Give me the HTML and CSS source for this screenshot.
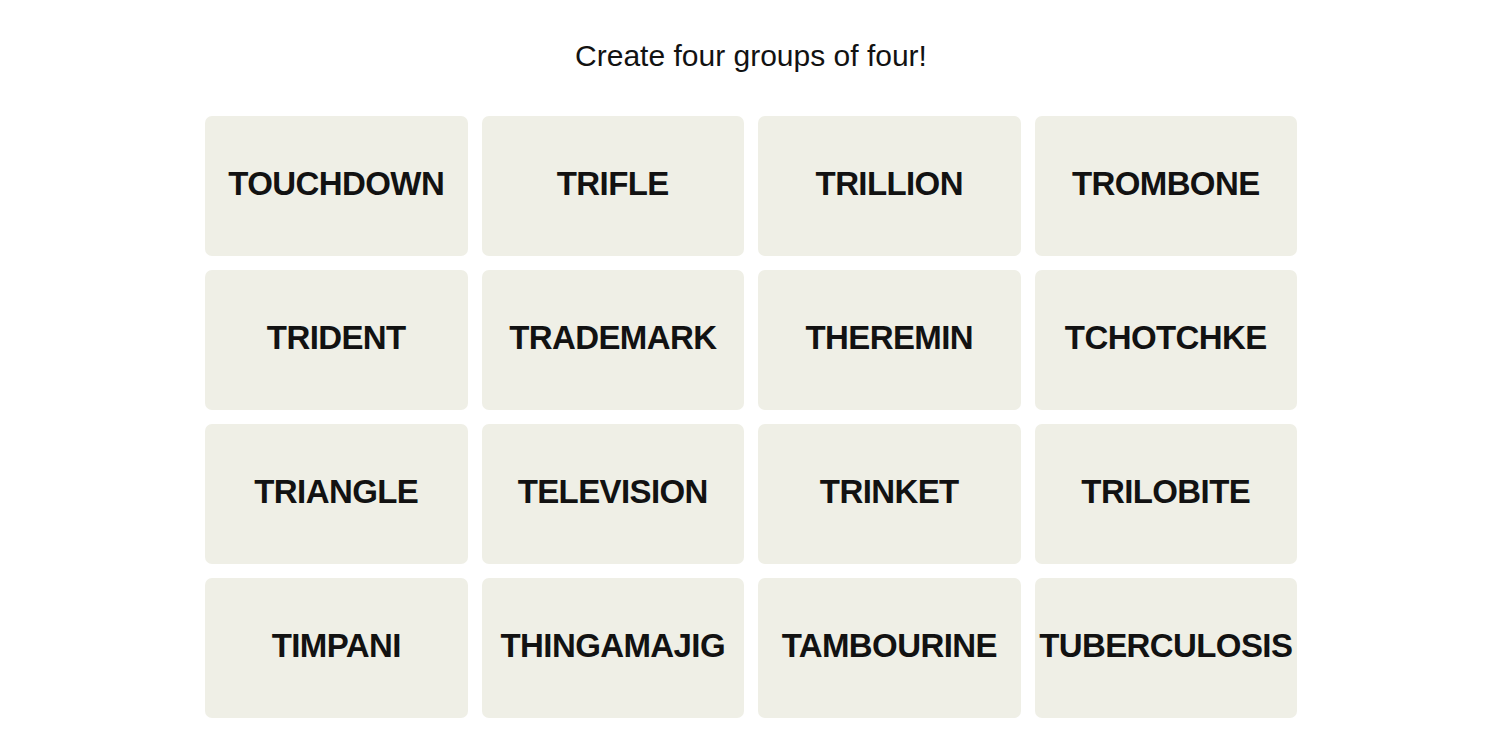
FILE: index.html
```html
<!DOCTYPE html>
<html lang="en">
<head>
    <meta charset="UTF-8">
    <meta name="viewport" content="width=device-width, initial-scale=1.0">
    <title>Connections</title>
    <link rel="stylesheet" href="styles.css">
</head>
<body>
    <div class="main-container">
        <p class="prompt">Create four groups of four!</p>
        <div class="board">
            <div class="tile">TOUCHDOWN</div>
            <div class="tile">TRIFLE</div>
            <div class="tile">TRILLION</div>
            <div class="tile">TROMBONE</div>
            <div class="tile">TRIDENT</div>
            <div class="tile">TRADEMARK</div>
            <div class="tile">THEREMIN</div>
            <div class="tile">TCHOTCHKE</div>
            <div class="tile">TRIANGLE</div>
            <div class="tile">TELEVISION</div>
            <div class="tile">TRINKET</div>
            <div class="tile">TRILOBITE</div>
            <div class="tile">TIMPANI</div>
            <div class="tile">THINGAMAJIG</div>
            <div class="tile">TAMBOURINE</div>
            <div class="tile">TUBERCULOSIS</div>
        </div>
    </div>
</body>
</html>
```

FILE: styles.css
```css
body {
    margin: 0;
    background-color: #ffffff;
    color: #121212;
}
.main-container {
    display: flex;
    flex-direction: column;
    align-items: center;
    padding-top: 36px;
    padding-left: 2px;
}
.prompt {
    margin: 0;
    font-family: "Liberation Sans", Arial, sans-serif;
    font-size: 30px;
    line-height: 40px;
}
.board {
    margin-top: 40px;
    width: 1092px;
    display: grid;
    grid-template-columns: repeat(4, 1fr);
    grid-auto-rows: 140px;
    gap: 14px;
}
.tile {
    background-color: #efefe6;
    border-radius: 7px;
    display: flex;
    justify-content: center;
    align-items: center;
    padding-bottom: 4px;
    font-family: "Liberation Sans", Arial, sans-serif;
    font-weight: bold;
    font-size: 33px;
    letter-spacing: -0.6px;
    text-transform: uppercase;
    color: #121212;
}
```
